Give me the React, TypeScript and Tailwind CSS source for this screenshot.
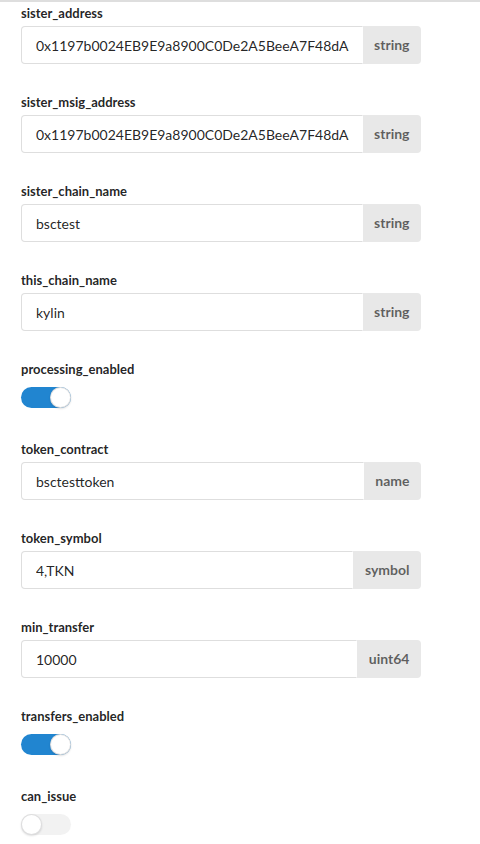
import React from "react";

type Field =
  | { kind: "text"; name: string; value: string; type: string }
  | { kind: "toggle"; name: string; on: boolean };

const fields: Field[] = [
  { kind: "text", name: "sister_address", value: "0x1197b0024EB9E9a8900C0De2A5BeeA7F48dA3c2e", type: "string" },
  { kind: "text", name: "sister_msig_address", value: "0x1197b0024EB9E9a8900C0De2A5BeeA7F48dA3c2e", type: "string" },
  { kind: "text", name: "sister_chain_name", value: "bsctest", type: "string" },
  { kind: "text", name: "this_chain_name", value: "kylin", type: "string" },
  { kind: "toggle", name: "processing_enabled", on: true },
  { kind: "text", name: "token_contract", value: "bsctesttoken", type: "name" },
  { kind: "text", name: "token_symbol", value: "4,TKN", type: "symbol" },
  { kind: "text", name: "min_transfer", value: "10000", type: "uint64" },
  { kind: "toggle", name: "transfers_enabled", on: true },
  { kind: "toggle", name: "can_issue", on: false },
];

function Toggle({ on }: { on: boolean }) {
  return (
    <div
      className={
        "relative w-[50px] h-[21px] rounded-full " +
        (on ? "bg-[#2185d0]" : "bg-[#f2f2f2]")
      }
    >
      <div
        className={
          "absolute top-0 w-[21px] h-[21px] rounded-full bg-white shadow-[0_1px_2px_0_rgba(34,36,38,0.15),0_0_0_1px_rgba(34,36,38,0.15)_inset] " +
          (on ? "left-[29px]" : "left-0")
        }
      />
    </div>
  );
}

export default function App() {
  return (
    <div
      className="w-[480px] min-h-[844px] bg-white text-[rgba(0,0,0,0.87)]"
      style={{ fontFamily: "Lato, 'Open Sans', sans-serif" }}
    >
      <div className="h-[2px] bg-[#dedede]" />
      <div className="pt-[2px] pl-[21px] w-[421px]">
        {fields.map((f) =>
          f.kind === "text" ? (
            <div key={f.name} className="mb-[29px]">
              <div className="h-[18px] leading-[18px] text-[13px] font-bold mb-[4px]">
                {f.name}
              </div>
              <div className="flex h-[38px]">
                <div className="flex-1 min-w-0 border border-[rgba(34,36,38,0.15)] border-r-transparent rounded-l-[4px] pl-[14px] pr-[13px] flex items-center">
                  <div className="flex-1 min-w-0 overflow-hidden whitespace-nowrap text-[14px] leading-[17px]">
                    {f.value}
                  </div>
                </div>
                <div className="shrink-0 bg-[#e8e8e8] rounded-r-[4px] px-[11.5px] flex items-center text-[14px] font-bold text-[rgba(0,0,0,0.6)] pb-[1px]">
                  {f.type}
                </div>
              </div>
            </div>
          ) : (
            <div key={f.name} className="mb-[32px]">
              <div className="h-[18px] leading-[18px] text-[13px] font-bold mb-[9px]">
                {f.name}
              </div>
              <Toggle on={f.on} />
            </div>
          )
        )}
      </div>
    </div>
  );
}
